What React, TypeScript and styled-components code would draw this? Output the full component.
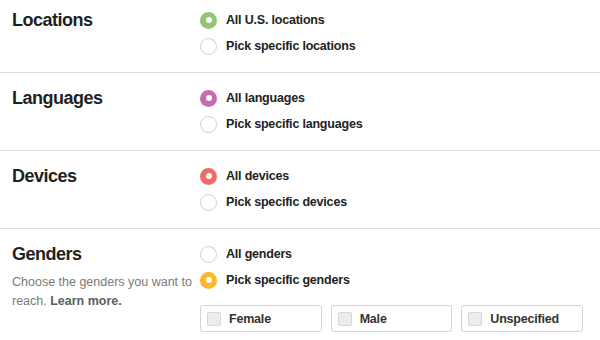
import React from "react";
import styled, { createGlobalStyle } from "styled-components";

const Global = createGlobalStyle`
  html, body { margin: 0; padding: 0; background: #fff; }
  body { font-family: "Liberation Sans", Arial, Helvetica, sans-serif; color: #222; }
`;

const Page = styled.div`
  width: 600px;
`;

const Section = styled.section`
  display: grid;
  grid-template-columns: 200px 1fr;
  padding: 12px 17px 13px 12px;
  border-bottom: 1px solid #dedede;
  &:first-child { padding-top: 7px; }
  &:last-child { border-bottom: none; }
`;

const Left = styled.div`
  display: flex;
  flex-direction: column;
`;

const Title = styled.h2`
  margin: 0;
  font-size: 18px;
  line-height: 26px;
  font-weight: 700;
  letter-spacing: -0.5px;
  color: #1f1f1f;
`;

const Desc = styled.p`
  margin: 6px 0 0;
  font-size: 12.5px;
  line-height: 19px;
  color: #7a7a7a;
  width: 188px;
  b { color: #5e5e5e; font-weight: 700; }
`;

const Right = styled.div`
  display: flex;
  flex-direction: column;
  margin-left: -12px;
`;

const Row = styled.label`
  display: flex;
  align-items: center;
  height: 26px;
  gap: 9px;
  font-size: 12.5px;
  font-weight: 700;
  letter-spacing: -0.2px;
  color: #222;
`;

const Radio = styled.span<{ $color?: string }>`
  box-sizing: border-box;
  width: 17px;
  height: 17px;
  border-radius: 50%;
  flex: none;
  display: flex;
  align-items: center;
  justify-content: center;
  background: ${(p) => p.$color || "#fff"};
  border: ${(p) => (p.$color ? "none" : "1px solid #cfcfcf")};
  &::after {
    content: "";
    display: ${(p) => (p.$color ? "block" : "none")};
    width: 6px;
    height: 6px;
    border-radius: 50%;
    background: #fff;
  }
`;

const Boxes = styled.div`
  display: grid;
  grid-template-columns: repeat(3, 1fr);
  gap: 9px;
  margin-top: 12px;
`;

const Box = styled.label`
  box-sizing: border-box;
  height: 27px;
  border: 1px solid #d4d4d4;
  border-radius: 3px;
  display: flex;
  align-items: center;
  gap: 8px;
  padding-left: 6px;
  font-size: 12.5px;
  font-weight: 700;
  letter-spacing: -0.2px;
  color: #333;
`;

const Check = styled.span`
  box-sizing: border-box;
  width: 14px;
  height: 14px;
  background: #ececec;
  border: 1px solid #d6d6d6;
  border-radius: 2px;
  flex: none;
`;

type Opt = { label: string; color?: string };

const RadioGroup = ({ options }: { options: Opt[] }) => (
  <>
    {options.map((o) => (
      <Row key={o.label}>
        <Radio $color={o.color} />
        {o.label}
      </Row>
    ))}
  </>
);

export default function App() {
  return (
    <Page>
      <Global />
      <Section>
        <Left><Title>Locations</Title></Left>
        <Right>
          <RadioGroup options={[{ label: "All U.S. locations", color: "#93c572" }, { label: "Pick specific locations" }]} />
        </Right>
      </Section>
      <Section>
        <Left><Title>Languages</Title></Left>
        <Right>
          <RadioGroup options={[{ label: "All languages", color: "#c96bb3" }, { label: "Pick specific languages" }]} />
        </Right>
      </Section>
      <Section>
        <Left><Title>Devices</Title></Left>
        <Right>
          <RadioGroup options={[{ label: "All devices", color: "#ee6e66" }, { label: "Pick specific devices" }]} />
        </Right>
      </Section>
      <Section>
        <Left>
          <Title>Genders</Title>
          <Desc>Choose the genders you want to reach. <b>Learn more.</b></Desc>
        </Left>
        <Right>
          <RadioGroup options={[{ label: "All genders" }, { label: "Pick specific genders", color: "#fbb829" }]} />
          <Boxes>
            {["Female", "Male", "Unspecified"].map((g) => (
              <Box key={g}><Check />{g}</Box>
            ))}
          </Boxes>
        </Right>
      </Section>
    </Page>
  );
}
